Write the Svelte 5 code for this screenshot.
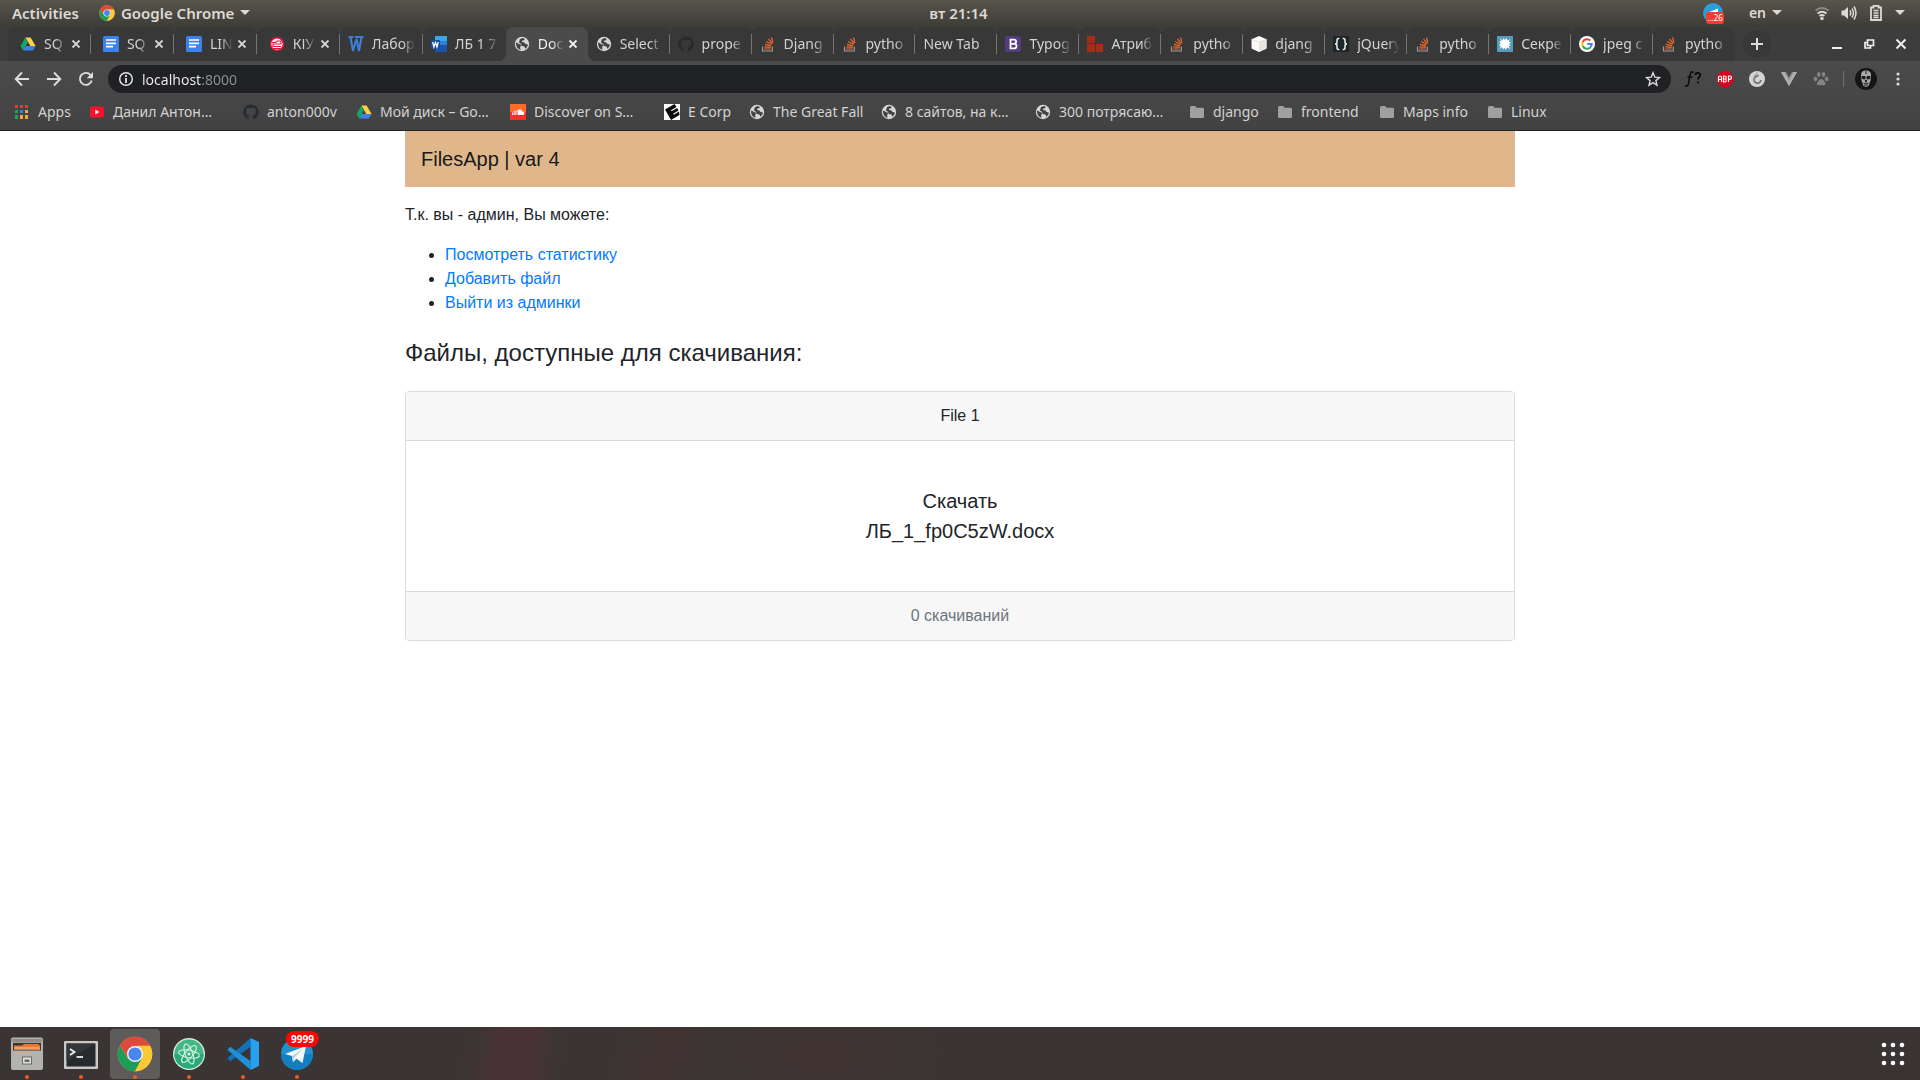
<script>
  const tabs = [
    { icon: 'drive', label: 'SQ', close: true },
    { icon: 'docs', label: 'SQ', close: true },
    { icon: 'docs', label: 'LIN', close: true },
    { icon: 'kiu', label: 'КІУ', close: true },
    { icon: 'wblue', label: 'Лабор' },
    { icon: 'word', label: 'ЛБ 1 7' },
    { icon: 'globe', label: 'Doc', close: true, active: true },
    { icon: 'globe', label: 'Select' },
    { icon: 'github', label: 'prope' },
    { icon: 'stack', label: 'Djang' },
    { icon: 'stack', label: 'pytho' },
    { icon: '', label: 'New Tab' },
    { icon: 'bootstrap', label: 'Typog' },
    { icon: 'redblocks', label: 'Атриб' },
    { icon: 'stack', label: 'pytho' },
    { icon: 'cube', label: 'djang' },
    { icon: 'braces', label: 'jQuery' },
    { icon: 'stack', label: 'pytho' },
    { icon: 'splat', label: 'Секре' },
    { icon: 'google', label: 'jpeg c' },
    { icon: 'stack', label: 'pytho' }
  ];

  const bookmarks = [
    { icon: 'apps', label: 'Apps' },
    { icon: 'youtube', label: 'Данил Антон…' },
    { icon: 'github', label: 'anton000v' },
    { icon: 'drive', label: 'Мой диск – Go…' },
    { icon: 'soundcloud', label: 'Discover on S…' },
    { icon: 'ecorp', label: 'E Corp' },
    { icon: 'globe', label: 'The Great Fall' },
    { icon: 'globe', label: '8 сайтов, на к…' },
    { icon: 'globe', label: '300 потрясаю…' },
    { icon: 'folder', label: 'django' },
    { icon: 'folder', label: 'frontend' },
    { icon: 'folder', label: 'Maps info' },
    { icon: 'folder', label: 'Linux' }
  ];

  const extensions = ['fontq', 'abp', 'cday', 'vue', 'paw'];
  const dock = ['files', 'terminal', 'chrome', 'atom', 'vscode', 'telegram'];
  const adminLinks = ['Посмотреть статистику', 'Добавить файл', 'Выйти из админки'];

  let address = $state('localhost:8000');
</script>

{#snippet chromeLogo(size)}
  <svg width={size} height={size} viewBox="0 0 48 48" aria-hidden="true">
    <circle cx="24" cy="24" r="23" fill="#fbc933" />
    <path d="M24 24 4.1 12.5A23 23 0 0 1 43.9 12.5L24 13.5Z" fill="#dd4b3e" />
    <path d="M4.1 12.5A23 23 0 0 0 24 47L33.6 29.5 24 34 14.5 29.5Z" fill="#1c9e5a" />
    <path d="M43.9 12.5A23 23 0 0 1 24 47L33.5 29.5 34 24 30 13.4 24 12.5Z" fill="#fbc933" />
    <path d="M4.1 12.5 14.5 29.5 14 20 24 12.5H43.9A23 23 0 0 0 4.1 12.5Z" fill="#dd4b3e" />
    <circle cx="24" cy="24" r="10.7" fill="#f4f4f4" />
    <circle cx="24" cy="24" r="8.8" fill="#4a86f0" />
  </svg>
{/snippet}

{#snippet icon(name)}
  <svg class="ico" width="16" height="16" viewBox="0 0 16 16" aria-hidden="true">
    {#if name === 'drive'}
      <path d="M5.4 1.5h5.2L15.6 10h-5.2z" fill="#ffcf48" />
      <path d="M5.4 1.5 8 6 3.2 14.4.6 10z" fill="#11a861" />
      <path d="M5.8 10h9.8L13 14.4H3.2z" fill="#3f80ec" />
    {:else if name === 'docs'}
      <rect width="16" height="16" rx="1.5" fill="#3b82f1" />
      <path d="M3 4h10M3 7.3h10M3 10.6h7" stroke="#fff" stroke-width="1.7" />
    {:else if name === 'kiu'}
      <circle cx="8" cy="8" r="7.3" fill="#d5163a" />
      <circle cx="8" cy="8" r="5.6" fill="#fff" />
      <path d="M3 6.5h3.500L8.500 5H12v3H4v2.500h8M4.500 12.500h7" fill="none" stroke="#d5163a" stroke-width="1.200" />
    {:else if name === 'wblue'}
      <path d="M.5 1h5M7 1h8.500M2.500 1 5 15 8.500 3 11 15 13.500 1" fill="none" stroke="#3f7fd9" stroke-width="2" />
    {:else if name === 'word'}
      <path d="M4 0h12v5H4z" fill="#37a9ea" />
      <path d="M4 5h12v4H4z" fill="#2b7fd6" />
      <path d="M4 9h12v7H4z" fill="#1853ad" />
      <rect y="4" width="9" height="9" rx="1" fill="#124a9c" />
      <path d="m1.700 6 1.200 5 1.600-4.500L6 11l1.300-5" fill="none" stroke="#fff" stroke-width="1.300" />
    {:else if name === 'globe'}
      <circle cx="8" cy="8" r="7.200" fill="#d5d6d6" />
      <path d="M2 6.700c2.300-.3 2 1.500 3.500 1.600 1.700.1 2 1.200 1 2.200-.6.700-.3 1.700.2 3.200C3.500 13 1.800 10.400 2 6.700Z" fill="#424242" />
      <path d="M5.800 3.300 8.600 2l2 .7-.4 1.600-1.900.3-.4 1.500 2.600.5 1 1.500 2.400.3c-.2 1.700-1 3.100-2.500 4.300l-.9-2.300-2.800-.3L7 7.700 5 6.800Z" fill="#424242" />
    {:else if name === 'github'}
      <path d="M8 .4a7.800 7.800 0 0 0-2.500 15.200c.4.100.5-.2.500-.4v-1.500c-2.200.5-2.700-.9-2.700-.9-.4-.9-.9-1.200-.9-1.200-.7-.5.100-.5.100-.5.800.1 1.200.8 1.200.8.700 1.200 1.900.9 2.300.7.100-.5.300-.9.500-1.100-1.700-.2-3.500-.9-3.500-3.800 0-.9.300-1.600.8-2.100-.1-.2-.4-1 .1-2.100 0 0 .7-.2 2.100.8a7.400 7.400 0 0 1 3.900 0c1.500-1 2.100-.8 2.100-.8.400 1.100.2 1.900.1 2.100.5.600.8 1.300.8 2.100 0 3-1.800 3.600-3.500 3.800.3.300.5.800.5 1.500v2.200c0 .2.100.5.500.4A7.800 7.800 0 0 0 8 .4Z" fill="#262b31" />
    {:else if name === 'stack'}
      <path d="M2.500 10.500V15h9.800v-4.500" fill="none" stroke="#9a9da0" stroke-width="1.200" />
      <path d="M4.200 13h6.400M4.300 10.800l6.400.6M4.900 8.300l6.100 1.600M6.200 5.400l5.300 3.200M8.500 3l3.800 4.700M11.500 1.500l1.400 5" stroke="#ee6a2c" stroke-width="1.200" />
    {:else if name === 'bootstrap'}
      <rect width="16" height="16" rx="2.500" fill="#553b80" />
      <path d="M5.500 3.700h3.300c3 0 3 3.700.3 4 3.300.3 3.200 4.600-.1 4.600H5.500zM5.500 7.900h3.800" fill="none" stroke="#fff" stroke-width="1.800" />
    {:else if name === 'redblocks'}
      <path d="M0 0h8v7H0zM0 8h8v8H0zM9 8h7v8H9z" fill="#a22e16" />
    {:else if name === 'cube'}
      <path d="M8 0 15.500 3.200V12.500L8 16 .5 12.500V3.200z" fill="#fbfaf7" />
      <path d="M8 6.200 15.500 3.200V12.500L8 16z" fill="#e8e5df" />
      <path d="M.7 3.300 8 6.200l7.300-2.900" fill="none" stroke="#ddd9d2" stroke-width=".8" />
    {:else if name === 'braces'}
      <rect width="16" height="16" fill="#1c262c" />
      <path d="M6.300 2.500H5.500Q4 2.500 4 4v2.200Q4 8 2 8q2 0 2 1.800V12q0 1.500 1.500 1.500h.8M9.700 2.500h.8Q12 2.500 12 4v2.200Q12 8 14 8q-2 0-2 1.800V12q0 1.500-1.500 1.500h-.8" fill="none" stroke="#f2f2e8" stroke-width="1.500" />
    {:else if name === 'splat'}
      <rect width="16" height="16" rx="1" fill="#579dbb" />
      <path d="m3 2 2.500 2.500L6.500 2l1.200 2L9.500 2l.8 2.500L13 3l-1.300 2.800 2.300.7-2 1.500 1.800 1.500-2.300.3 1.500 3.200-3-1.800L9 14l-1.500-2.300L6 13.500l-.7-2.500L2.500 13l1.300-3L2 9l1.700-1.300L2.300 5.500l2.200-.2z" fill="#fff" />
    {:else if name === 'google'}
      <circle cx="8" cy="8" r="8" fill="#fff" />
      <path d="M11.300 4.500A4.700 4.700 0 0 0 3.800 6" fill="none" stroke="#e94235" stroke-width="2" />
      <path d="M3.800 6a4.700 4.700 0 0 0 0 4" fill="none" stroke="#fabb05" stroke-width="2" />
      <path d="M3.800 10a4.700 4.700 0 0 0 7.200 1.700" fill="none" stroke="#34a853" stroke-width="2" />
      <path d="M11 11.700A4.700 4.700 0 0 0 12.700 8H8.200" fill="none" stroke="#4285f4" stroke-width="2" />
    {:else if name === 'apps'}
      <path d="M1 1h3v3H1zM6 1h3v3H6zM11 1h3v3h-3z" fill="#f0343a" />
      <path d="M1 6h3v3H1zM1 11h3v4H1z" fill="#1fa25c" />
      <path d="M6 6h3v3H6z" fill="#2f86ee" />
      <path d="M11 6h3v3h-3zM6 11h3v4H6zM11 11h3v4h-3z" fill="#f6a93b" />
    {:else if name === 'youtube'}
      <rect x="1" y="2.500" width="14" height="11" rx="2.500" fill="#f8112c" />
      <path d="M6.300 5.500v5l4-2.500z" fill="#fff" />
    {:else if name === 'soundcloud'}
      <rect width="16" height="8" fill="#ff6b2c" />
      <rect y="8" width="16" height="8" fill="#fb2e2b" />
      <path d="M2.500 8.500V11M4.200 7.300V11M5.900 6.800V11" stroke="#fff" stroke-width="1" />
      <path d="M7.500 11V6c2-1.600 4.300-.5 4.600 1.600 3-.4 3 3.400.6 3.400z" fill="#fff" />
    {:else if name === 'ecorp'}
      <rect width="16" height="16" fill="#fff" />
      <path d="M1 5.500 10.500 0 12.500 3 7 6.300l.6 1L13 4l1.600 2.500L9.200 9.800l.6 1L15 7.600 15.500 11 7 16z" fill="#0b0b0b" />
    {:else if name === 'folder'}
      <path d="M1 3.500Q1 2 2.500 2H6l1.700 1.800h6Q15 3.800 15 5v7.700q0 1.300-1.300 1.300H2.300Q1 14 1 12.700z" fill="#9fa19f" />
    {/if}
  </svg>
{/snippet}

{#snippet extension(name)}
  <svg width="20" height="20" viewBox="0 0 20 20" aria-hidden="true">
    {#if name === 'fontq'}
      <path d="M10.500 3.500Q7.800 1.500 7 6L5.500 14.500Q4.800 18 2.300 16.500M4.500 8h5" fill="none" stroke="#0b0b0b" stroke-width="1.500" />
      <path d="M12.300 6q.2-2 2.500-2 2.600 0 2.400 2.200c-.2 1.800-2.200 2-2.200 4.300M15 12.500v2" fill="none" stroke="#0b0b0b" stroke-width="1.800" />
    {:else if name === 'abp'}
      <path d="M6.700 2h6.600L18 6.700v6.600L13.300 18H6.700L2 13.300V6.700z" fill="#d7041b" />
      <path d="M3.500 13V8.500Q3.500 7 5 7t1.500 1.500V13M3.500 10.500h3M8.500 7v6h1.300q1.500 0 1.500-1.500T10 10q1.200 0 1.200-1.500T9.800 7zM8.500 10H10M13.500 13V7H15q1.500 0 1.500 1.600T15 10.300h-1.500" fill="none" stroke="#fff" stroke-width="1.200" />
    {:else if name === 'cday'}
      <circle cx="10" cy="10" r="8" fill="#d4d4d4" />
      <path d="M11.500 6 9 7.500a3.500 3.500 0 1 0 5 3.500" fill="none" stroke="#777" stroke-width="2" />
      <path d="M10.500 3.500Q6.500 6 7 11.500" fill="none" stroke="#999" stroke-width="1" />
    {:else if name === 'vue'}
      <path d="M2 3h5l3 5.500L13 3h5l-8 14z" fill="#8f8f8f" />
      <path d="M2 3h3.500L10 11.500 14.500 3H18l-8 14z" fill="#aeaeae" />
    {:else}
      <g fill="#858585">
        <ellipse cx="4.500" cy="10" rx="1.800" ry="2.200" />
        <ellipse cx="7.800" cy="5.500" rx="1.700" ry="2.400" />
        <ellipse cx="12.500" cy="5.500" rx="1.700" ry="2.400" />
        <ellipse cx="15.700" cy="10" rx="1.800" ry="2.200" />
        <path d="M10.200 10q2 0 2.800 2 2.300 2.200 1.300 3.600-1.200 1.300-4.100.2-2.900 1.100-4.100-.2-1-1.400 1.300-3.600Q8.200 10 10.200 10Z" />
      </g>
    {/if}
  </svg>
{/snippet}

{#snippet dockIcon(name)}
  {#if name === 'chrome'}
    {@render chromeLogo(36)}
  {:else}
    <svg width="36" height="36" viewBox="0 0 36 36" aria-hidden="true">
      {#if name === 'files'}
        <path d="M4 1.500h28q2 0 2 2V32q0 2-2 2H4q-2 0-2-2V3.500q0-2 2-2Z" fill="#b2b2b0" />
        <path d="M3 3h30v3.500H3z" fill="#8d8d8b" />
        <path d="M4 7h28v9H4z" fill="#3c3430" />
        <path d="M5 9.500h8l2-1.500h14l2 1.500V14H5z" fill="#e8792c" />
        <path d="M5.500 11.500h25v1h-25z" fill="#f8cfa0" />
        <path d="M3 14.500h30V32q0 1.500-1.500 1.500h-27Q3 33.500 3 32z" fill="#b3b3b1" />
        <rect x="13.500" y="21" width="9" height="7" fill="#e2e2e0" stroke="#686866" />
        <path d="M15.500 23.500h5v2.500h-5z" fill="#686866" />
      {:else if name === 'terminal'}
        <rect x="1" y="5" width="34" height="28" rx="1" fill="#c9c9c5" />
        <rect x="3.500" y="7.500" width="29" height="23" fill="#262a2d" />
        <path d="M3.500 7.500h29L3.500 25z" fill="#33373a" />
        <path d="m7 13 4.500 3L7 19" fill="none" stroke="#eee" stroke-width="1.800" />
        <path d="M13.500 21H20" stroke="#eee" stroke-width="1.800" />
      {:else if name === 'atom'}
        <circle cx="18" cy="18" r="16" fill="#d9e5dd" />
        <circle cx="18" cy="18" r="14.600" fill="#41b883" />
        <path d="M3.400 18a14.600 14.600 0 0 0 29.200 0z" fill="#28a978" />
        <g fill="none" stroke="#d6f2e2" stroke-width="1.100">
          <ellipse cx="18" cy="18" rx="10.500" ry="3.800" transform="rotate(10 18 18)" />
          <ellipse cx="18" cy="18" rx="10.500" ry="3.800" transform="rotate(70 18 18)" />
          <ellipse cx="18" cy="18" rx="10.500" ry="3.800" transform="rotate(130 18 18)" />
        </g>
        <circle cx="18" cy="18" r="1.600" fill="#fff" />
      {:else if name === 'vscode'}
        <path d="M25.500 2 2.300 22.300l2.900 3L25.500 11z" fill="#1272b4" />
        <path d="M25.500 34 2.300 13.700l2.900-3L25.500 25z" fill="#1f8fd8" />
        <path d="M25.500 2 34 6v24l-8.500 4z" fill="#27a0ef" />
      {:else}
        <circle cx="18" cy="18" r="16" fill="#2191cd" />
        <path d="M2 18a16 16 0 0 0 32 0z" fill="#137fc0" />
        <path d="M6 18 27 10 23.500 27 17.500 22.800 14 26 13 20z" fill="#f4f8fb" />
        <path d="M13 20 24 12.500 15.500 21.500 14 26z" fill="#b9d4e6" />
      {/if}
    </svg>
  {/if}
{/snippet}

<div class="desktop">
  <header class="topbar">
    <div class="side">
      <button class="activities">Activities</button>
      <button class="appmenu">
        {@render chromeLogo(16)}
        <span>Google Chrome</span>
        <i class="caret"></i>
      </button>
    </div>
    <time class="clock">вт 21:14</time>
    <div class="side right">
      <span class="tray-telegram">
        <svg width="20" height="20" viewBox="0 0 20 20" aria-hidden="true">
          <circle cx="10" cy="10" r="10" fill="#2c9cdb" />
          <path d="M4 10 15 5.500V12H9z" fill="#fff" />
        </svg>
        <b>...26</b>
      </span>
      <button class="lang">en <i class="caret"></i></button>
      <button class="status" aria-label="System menu">
        <svg width="16" height="16" viewBox="0 0 16 16" aria-hidden="true">
          <path d="M1.500 5.500Q8 .5 14.500 5.500" fill="none" stroke="#8c8a84" stroke-width="1.800" />
          <path d="M3.500 8.500Q8 5 12.500 8.500M5.500 11Q8 9 10.500 11" fill="none" stroke="#dddad3" stroke-width="1.800" />
          <circle cx="8" cy="13.500" r="1.700" fill="#dddad3" />
        </svg>
        <svg width="16" height="16" viewBox="0 0 16 16" aria-hidden="true">
          <path d="M.5 5.500H3L7 2v12l-4-3.500H.5z" fill="#dddad3" />
          <path d="M9 5.500q1.500 2.500 0 5M11 3.500q3 4.500 0 9M13 1.500q4 6.500 0 13" fill="none" stroke="#dddad3" stroke-width="1.500" />
        </svg>
        <svg width="16" height="18" viewBox="0 0 16 18" aria-hidden="true">
          <path d="M3 3.500h2.500V1.800h5v1.700H13V16H3z" fill="none" stroke="#dddad3" stroke-width="1.800" />
          <path d="M5.500 6.500h5M5.500 9h5M5.500 11.500h5M5.500 13.500h5" stroke="#dddad3" stroke-width="1.300" />
        </svg>
        <i class="caret"></i>
      </button>
    </div>
  </header>

  <div class="tabstrip">
    <div class="tabs">
      {#each tabs as tab, i}
        <div
          class="tab"
          class:roomy={tab.close && !tab.active}
          class:active={tab.active}
          class:nosep={tab.active || tabs[i + 1]?.active}
        >
          <button class="tab-main">
            {#if tab.icon}{@render icon(tab.icon)}{/if}
            <span class="fade">{tab.label}</span>
          </button>
          {#if tab.close}
            <button class="tab-close" aria-label="Close tab">
              <svg width="10" height="10" viewBox="0 0 10 10" aria-hidden="true">
                <path d="m1.500 1.500 7 7m0-7-7 7" stroke="currentColor" stroke-width="1.800" />
              </svg>
            </button>
          {/if}
        </div>
      {/each}
    </div>
    <button class="newtab" aria-label="New tab">
      <svg width="14" height="14" viewBox="0 0 14 14" aria-hidden="true">
        <path d="M7 1v12M1 7h12" stroke="#dcdcdc" stroke-width="2" />
      </svg>
    </button>
    <div class="winctl">
      <button aria-label="Minimize">
        <svg width="12" height="12" viewBox="0 0 12 12" aria-hidden="true"><path d="M1 10h10" stroke="#eee" stroke-width="2" /></svg>
      </button>
      <button aria-label="Restore">
        <svg width="12" height="12" viewBox="0 0 12 12" aria-hidden="true">
          <path d="M4.500 2h6v5.500h-6zM4 4.500H2V10h5.500V8" fill="none" stroke="#eee" stroke-width="1.700" />
        </svg>
      </button>
      <button aria-label="Close">
        <svg width="12" height="12" viewBox="0 0 12 12" aria-hidden="true"><path d="m1.500 1.500 9 9m0-9-9 9" stroke="#eee" stroke-width="2" /></svg>
      </button>
    </div>
  </div>

  <div class="browserbars">
    <div class="toolbar">
      <button class="nav" aria-label="Back">
        <svg width="16" height="16" viewBox="0 0 16 16" aria-hidden="true"><path d="M15 8H2M8 1.500 1.700 8 8 14.500" fill="none" stroke="#dedede" stroke-width="1.900" /></svg>
      </button>
      <button class="nav" aria-label="Forward">
        <svg width="16" height="16" viewBox="0 0 16 16" aria-hidden="true"><path d="M1 8h13M8 1.500 14.300 8 8 14.500" fill="none" stroke="#dedede" stroke-width="1.900" /></svg>
      </button>
      <button class="nav" aria-label="Reload">
        <svg width="16" height="16" viewBox="0 0 16 16" aria-hidden="true">
          <path d="M13.700 9.500A6 6 0 1 1 12.500 4" fill="none" stroke="#dedede" stroke-width="1.900" />
          <path d="M15 1v6.300H8.700z" fill="#dedede" />
        </svg>
      </button>
      <div class="omnibox">
        <svg width="16" height="16" viewBox="0 0 16 16" aria-hidden="true">
          <circle cx="8" cy="8" r="6.300" fill="none" stroke="#e4e4e4" stroke-width="1.500" />
          <path d="M8 4v2M8 7v5" stroke="#e4e4e4" stroke-width="1.800" />
        </svg>
        <input aria-label="Address" bind:value={address} />
        <button class="star" aria-label="Bookmark this page">
          <svg width="16" height="16" viewBox="0 0 16 16" aria-hidden="true">
            <path d="m8 1.700 1.800 4.400 4.700.4-3.600 3.100 1.100 4.600L8 11.700l-4 2.500 1.100-4.600L1.500 6.500l4.700-.4z" fill="none" stroke="#d8d8d8" stroke-width="1.400" />
          </svg>
        </button>
      </div>
      <div class="extensions">
        {#each extensions as name}
          <button aria-label={name}>{@render extension(name)}</button>
        {/each}
      </div>
      <i class="divider"></i>
      <button class="avatar" aria-label="Profile">
        <svg width="22" height="22" viewBox="0 0 22 22" aria-hidden="true">
          <circle cx="11" cy="11" r="11" fill="#151515" />
          <path d="M6 7q0-4.500 5-4.500T16 7l-.5 5.500-2 5.500q-2.500 1.500-5 0l-2-5.500z" fill="#a8a8a8" />
          <path d="M7 8.500h3v2.300H7.500zM12 8.500h3l-.5 2.300H12zM10.500 12h1v1.700h-1zM8.500 15.300h5M9 17h4M11 3v3" fill="#151515" stroke="#151515" stroke-width=".9" />
        </svg>
      </button>
      <button class="kebab" aria-label="Menu">
        <svg width="4" height="14" viewBox="0 0 4 14" aria-hidden="true">
          <g fill="#dedede"><circle cx="2" cy="2" r="1.600" /><circle cx="2" cy="7" r="1.600" /><circle cx="2" cy="12" r="1.600" /></g>
        </svg>
      </button>
    </div>
    <nav class="bookmarks" aria-label="Bookmarks">
      {#each bookmarks as mark}
        <a href="#top">{@render icon(mark.icon)}<span>{mark.label}</span></a>
      {/each}
    </nav>
  </div>

  <main class="page" id="top">
    <div class="container">
      <nav class="navbar"><a href="#top">FilesApp | var 4</a></nav>
      <p>Т.к. вы - админ, Вы можете:</p>
      <ul>
        {#each adminLinks as link}
          <li><a href="#top">{link}</a></li>
        {/each}
      </ul>
      <h4>Файлы, доступные для скачивания:</h4>
      <article class="card">
        <div class="card-header">File 1</div>
        <div class="card-body">
          <a href="#top">Скачать<br />ЛБ_1_fp0C5zW.docx</a>
        </div>
        <div class="card-footer">0 скачиваний</div>
      </article>
    </div>
  </main>

  <footer class="dock">
    {#each dock as name}
      <button class:current={name === 'chrome'} aria-label={name}>
        {@render dockIcon(name)}
        {#if name === 'telegram'}<b class="badge">9999</b>{/if}
        <i class="running"></i>
      </button>
    {/each}
    <button class="launcher" aria-label="Show applications">
      <svg width="24" height="24" viewBox="0 0 24 24" aria-hidden="true">
        <g fill="#fff">
          {#each [3, 12, 21] as y}
            {#each [3, 12, 21] as x}
              <circle cx={x} cy={y} r="2.300" />
            {/each}
          {/each}
        </g>
      </svg>
    </button>
  </footer>
</div>

<style>
  :global(body) {
    background: #fff;
  }

  .desktop {
    display: flex;
    flex-direction: column;
    min-height: 100vh;
    font-family: "Noto Sans", "Open Sans", sans-serif;
    font-size: 14px;
    color: #d2d2d2;
  }

  .desktop * {
    box-sizing: border-box;
  }

  button {
    display: flex;
    align-items: center;
    padding: 0;
    border: 0;
    background: none;
    color: inherit;
    font: inherit;
  }

  svg {
    display: block;
    flex: none;
  }

  /* System bar */
  .topbar {
    display: grid;
    grid-template-columns: 1fr auto 1fr;
    align-items: center;
    height: 27px;
    padding: 0 15px 2px 12px;
    background: linear-gradient(#58554c, #3d3c37);
    color: #dddad3;
    font-size: 15px;
    font-weight: 600;
    line-height: 20px;
  }

  .side {
    display: flex;
    align-items: center;
    gap: 20px;
  }

  .side.right {
    justify-content: flex-end;
  }

  .appmenu {
    gap: 6px;
  }

  .caret {
    flex: none;
    border: 5px solid transparent;
    border-top-color: #dddad3;
    border-bottom: 0;
  }

  .lang {
    gap: 6px;
    margin-right: 12px;
    font-size: 14px;
  }

  .status {
    gap: 11px;
  }

  .tray-telegram {
    position: relative;
    margin-right: 6px;
  }

  .tray-telegram b {
    position: absolute;
    right: -1px;
    bottom: -1px;
    padding: 0 1px;
    border-radius: 3px;
    background: #f23c34;
    color: #fff;
    font-size: 8px;
    font-weight: 400;
    line-height: 12px;
  }

  /* Tab strip */
  .tabstrip {
    display: flex;
    align-items: center;
    height: 34px;
    padding: 0 8px;
    background: #3d3d3d;
  }

  .tabs {
    display: grid;
    grid-template-columns: repeat(6, minmax(0, 83fr)) repeat(15, minmax(0, 82fr));
    flex: 1;
    min-width: 0;
    height: 34px;
  }

  .tab {
    position: relative;
    display: flex;
    align-items: center;
    min-width: 0;
    padding: 0 8px;
    border-radius: 8px 8px 0 0;
    background: #383838;
  }

  .tab.roomy {
    padding-left: 12px;
  }

  .tab:not(.nosep):not(:last-child)::after {
    content: "";
    position: absolute;
    right: 0;
    top: 7px;
    width: 1px;
    height: 20px;
    background: #767676;
  }

  .tab.active {
    z-index: 1;
    background: #4b4b4b;
    color: #f0f0f0;
  }

  /* Curved feet that join the active tab to the toolbar */
  .tab.active::before,
  .tab.active::after {
    content: "";
    position: absolute;
    bottom: 0;
    width: 8px;
    height: 8px;
  }

  .tab.active::before {
    left: -8px;
    background: radial-gradient(circle at 0 0, transparent 8px, #4b4b4b 8px);
  }

  .tab.active::after {
    right: -8px;
    background: radial-gradient(circle at 8px 0, transparent 8px, #4b4b4b 8px);
  }

  .tab-main {
    flex: 1;
    min-width: 0;
    gap: 8px;
  }

  .fade {
    flex: 1;
    min-width: 0;
    overflow: hidden;
    white-space: nowrap;
    text-align: left;
    line-height: 20px;
    mask-image: linear-gradient(to left, transparent, #000 12px);
  }

  .tab-close {
    justify-content: center;
    width: 16px;
    height: 16px;
    margin-left: 1px;
    margin-right: -1px;
  }

  .newtab {
    justify-content: center;
    width: 28px;
    height: 28px;
    margin-left: 8px;
    border-radius: 14px;
    background: #383838;
  }

  .winctl {
    display: flex;
    gap: 20px;
    margin: 0 5px 0 60px;
  }

  /* Toolbar and bookmarks */
  .browserbars {
    background: linear-gradient(#4b4b4b, #424242);
    border-bottom: 1px solid #242424;
  }

  .toolbar {
    display: flex;
    align-items: center;
    height: 36px;
    padding: 0 20px 0 14px;
  }

  .nav {
    margin-right: 16px;
  }

  .omnibox {
    display: flex;
    align-items: center;
    gap: 8px;
    flex: 1;
    height: 28px;
    margin-left: -2px;
    padding: 0 10px;
    border-radius: 14px;
    background: #202124;
  }

  .omnibox input {
    flex: 1;
    min-width: 0;
    height: 24px;
    padding: 0;
    border: 0;
    outline: 0;
    font: inherit;
    background: linear-gradient(to right, #f1f1f1 60px, #8f9194 60px);
    background-clip: text;
    color: transparent;
    caret-color: #fff;
  }

  .extensions {
    display: flex;
    gap: 12px;
    margin-left: 12px;
  }

  .divider {
    width: 1px;
    height: 16px;
    margin: 0 11px 0 12px;
    background: #727272;
  }

  .kebab {
    margin-left: 19px;
  }

  .bookmarks {
    display: grid;
    grid-template-columns: 75px 154px 113px 154px 154px 85px 132px 154px 154px 88px 102px 108px auto;
    align-items: center;
    height: 33px;
    padding: 0 14px 3px;
  }

  .bookmarks a {
    display: flex;
    align-items: center;
    gap: 8px;
    color: inherit;
    text-decoration: none;
    white-space: nowrap;
    line-height: 20px;
  }

  /* Web page */
  .page {
    flex: 1;
    background: #fff;
    color: #212529;
    font: 16px/24px "Liberation Sans", Arial, sans-serif;
  }

  .container {
    max-width: 1110px;
    margin: 0 auto;
  }

  .navbar {
    padding: 13px 16px;
    margin-bottom: 16px;
    background: #e0b78b;
    font-size: 20px;
    line-height: 30px;
  }

  .navbar a,
  .card-body a {
    color: inherit;
    text-decoration: none;
  }

  .navbar a {
    color: #191919;
  }

  .page p {
    margin: 0 0 16px;
  }

  .page ul {
    margin: 0;
    padding-left: 40px;
  }

  .page li a {
    color: #007bff;
    text-decoration: none;
  }

  .page h4 {
    margin: 24px 0;
    font-size: 24px;
    font-weight: 400;
    line-height: 28px;
  }

  .card {
    border: 1px solid #dcdcdc;
    border-radius: 4px;
    overflow: hidden;
    text-align: center;
  }

  .card-header,
  .card-footer {
    padding: 12px 20px;
    background: #f7f7f7;
  }

  .card-header {
    border-bottom: 1px solid #d8d8d8;
  }

  .card-footer {
    border-top: 1px solid #d8d8d8;
    color: #6c757d;
  }

  .card-body {
    padding: 45px 20px;
    font-size: 20px;
    line-height: 30px;
  }

  /* Dock */
  .dock {
    display: flex;
    align-items: center;
    gap: 4px;
    height: 53px;
    padding: 0 13px 0 2px;
    background:
      linear-gradient(100deg, transparent 460px, rgba(100, 45, 55, 0.35) 500px, rgba(100, 45, 55, 0.35) 525px, transparent 560px),
      linear-gradient(105deg, transparent 600px, rgba(90, 45, 45, 0.25) 650px, transparent 700px),
      radial-gradient(ellipse 120px 60px at 820px 28px, rgba(90, 45, 45, 0.25), transparent),
      #3a3534;
  }

  .dock button {
    position: relative;
    justify-content: center;
    width: 50px;
    height: 50px;
    border-radius: 4px;
  }

  .dock .current {
    background: #5f5b5a;
  }

  .running {
    position: absolute;
    left: 23px;
    bottom: 0;
    width: 4px;
    height: 4px;
    border-radius: 2px;
    background: #ee5a24;
  }

  .badge {
    position: absolute;
    top: 2px;
    left: 14px;
    padding: 0 5px;
    border-radius: 8px;
    background: #fb0505;
    color: #fff;
    font-size: 10px;
    line-height: 16px;
  }

  .dock .launcher {
    width: 28px;
    margin-left: auto;
  }
</style>
